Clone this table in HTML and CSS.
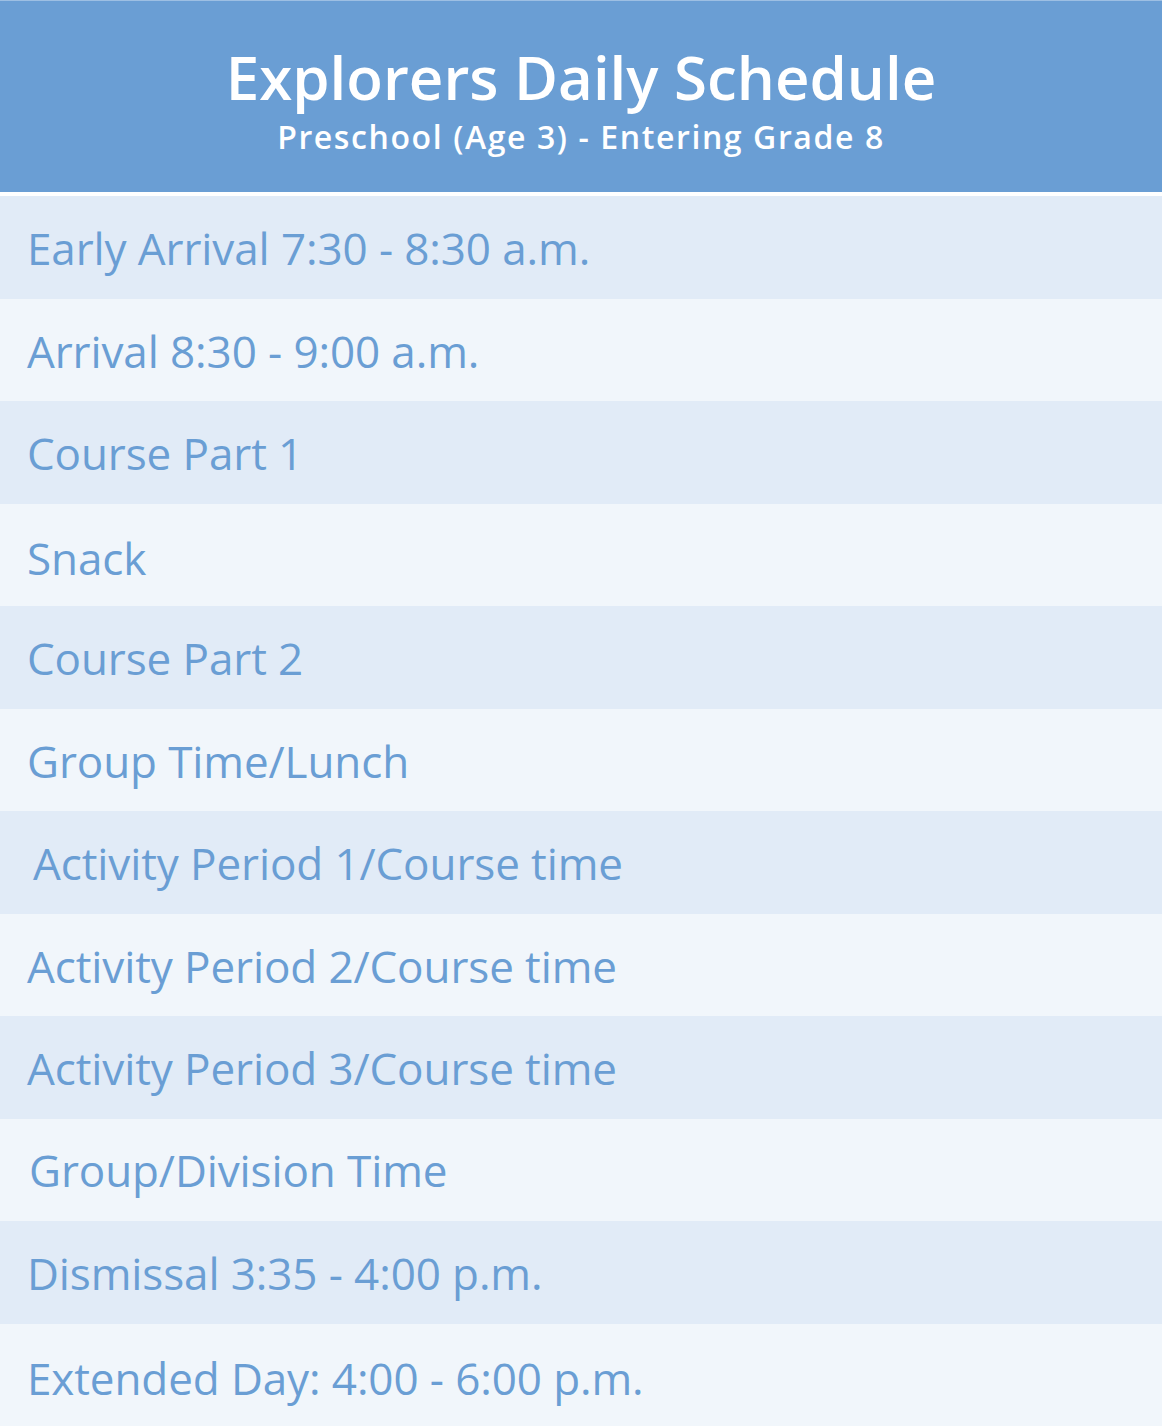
FILE: index.html
```html
<!DOCTYPE html>
<html>
<head>
<meta charset="utf-8">
<link rel="stylesheet" href="styles.css">
</head>
<body>
<div class="sheet">
  <header class="head">
    <h1 class="title">Explorers Daily Schedule</h1>
    <p class="sub">Preschool (Age 3) - Entering Grade 8</p>
  </header>
  <ul class="rows">
    <li class="row odd">Early Arrival 7:30 - 8:30 a.m.</li>
    <li class="row even">Arrival 8:30 - 9:00 a.m.</li>
    <li class="row odd">Course Part 1</li>
    <li class="row even low">Snack</li>
    <li class="row odd">Course Part 2</li>
    <li class="row even">Group Time/Lunch</li>
    <li class="row odd shift">Activity Period 1/Course time</li>
    <li class="row even">Activity Period 2/Course time</li>
    <li class="row odd">Activity Period 3/Course time</li>
    <li class="row even shift2 high">Group/Division Time</li>
    <li class="row odd">Dismissal 3:35 - 4:00 p.m.</li>
    <li class="row even low">Extended Day: 4:00 - 6:00 p.m.</li>
  </ul>
</div>
</body>
</html>
```
FILE: styles.css
```css
html, body { margin: 0; padding: 0; background: #ffffff; }
.sheet {
  width: 1162px;
  font-family: "Open Sans", "Noto Sans", sans-serif;
  border-top: 1px solid #9dbfe3;
}
.head {
  background: #6a9ed4;
  height: 195px;
  box-sizing: border-box;
  padding-top: 39px;
  text-align: center;
  color: #ffffff;
  border-bottom: 4px solid #ffffff;
}
.title {
  margin: 0;
  font-size: 60px;
  font-weight: 600;
  line-height: 74px;
}
.sub {
  margin: 5px 0 0;
  font-size: 32px;
  font-weight: 600;
  line-height: 36px;
  letter-spacing: 1.6px;
}
.rows { list-style: none; margin: 0; padding: 0; }
.row {
  height: 102.5px;
  display: flex;
  align-items: center;
  padding-left: 27px;
  padding-top: 2px;
  font-size: 44px;
  letter-spacing: -0.1px;
  color: #6a9ed4;
  box-sizing: border-box;
}
.odd { background: #e1ebf7; }
.even { background: #f1f6fb; }
.shift { padding-left: 33px; }
.shift2 { padding-left: 29px; }
.low { padding-top: 7px; }
.high { padding-top: 0; }
```
